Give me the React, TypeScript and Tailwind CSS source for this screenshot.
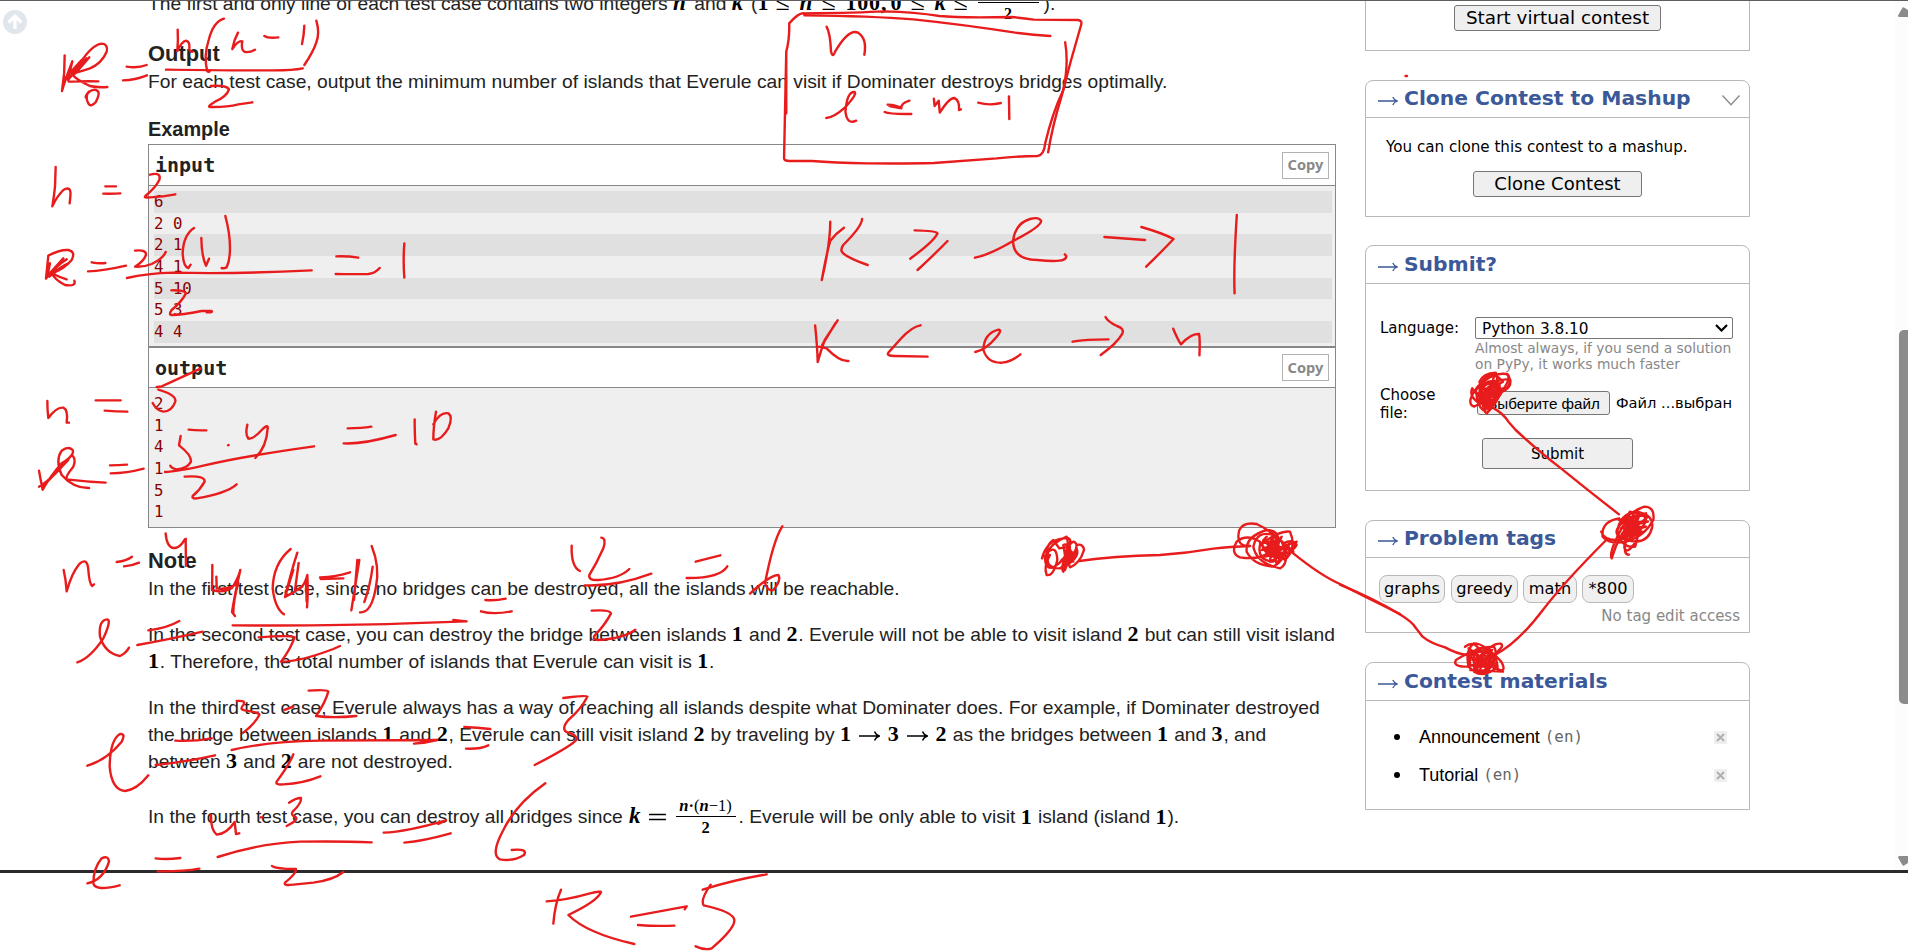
import React from "react";

const sans = "font-['Liberation_Sans',Arial,sans-serif]";
const verdana = "font-['DejaVu_Sans',Verdana,sans-serif]";
const mono = "font-['DejaVu_Sans_Mono',Consolas,monospace]";

function N({ children }: { children: React.ReactNode }) {
  return (
    <span className="font-['Liberation_Serif',serif] text-[22px] leading-none font-bold tracking-[0.8px] text-black">
      {children}
    </span>
  );
}

function V({ children }: { children: React.ReactNode }) {
  return (
    <span className="font-['Liberation_Serif',serif] text-[23px] leading-none font-bold text-black italic">
      {children}
    </span>
  );
}

function Leq() {
  return (
    <span className="w-[24px] font-['Liberation_Serif',serif] text-[26px] leading-none text-black">≤</span>
  );
}

function Line({ children, className = "" }: { children: React.ReactNode; className?: string }) {
  return <p className={`h-[27px] text-[19.24px] leading-[27px] whitespace-nowrap ${className}`}>{children}</p>;
}

function CopyButton() {
  return (
    <button className="h-[27px] w-[47px] border border-[#b2b2b2] bg-white pb-px font-['Noto_Sans',sans-serif] text-[14.6px] leading-none font-bold text-[#888]">
      Copy
    </button>
  );
}

const inputRows = ["6", "2 0", "2 1", "4 1", "5 10", "5 3", "4 4"];
const outputRows = ["2", "1", "4", "1", "5", "1"];

function Samples() {
  return (
    <div className={`w-[1188px] border border-[#888] ${mono}`}>
      <div className="flex h-[40px] items-center justify-between pr-[6px] pl-[6px]">
        <span className="text-[20px] font-bold text-[#222]">input</span>
        <CopyButton />
      </div>
      <div className="h-[161px] border-t border-[#888] bg-[#efefef] pt-[5px] pr-[3px] pl-[5px]">
        {inputRows.map((row, i) => (
          <div
            key={row}
            className={`h-[21.67px] text-[15.7px] leading-[22px] whitespace-pre text-[#880000] ${i % 2 === 0 ? "bg-[#e0e0e0]" : ""}`}
          >
            {row}
          </div>
        ))}
      </div>
      <div className="flex h-[41px] items-center justify-between border-t-2 border-[#888] pr-[6px] pl-[6px]">
        <span className="text-[20px] font-bold text-[#222]">output</span>
        <CopyButton />
      </div>
      <div className="h-[140px] border-t border-[#888] bg-[#efefef] pt-[5px] pl-[5px]">
        {outputRows.map((row, i) => (
          <div key={i} className="h-[21.7px] text-[15.7px] leading-[22px] text-[#880000]">
            {row}
          </div>
        ))}
      </div>
    </div>
  );
}

function Statement() {
  return (
    <main className={`w-[1188px] shrink-0 text-[#222] ${sans}`}>
      <div className="flex h-[17px] items-end">
        <Line className="mb-[2.5px] flex items-baseline">
          <span className="whitespace-pre">
            The first and only line of each test case contains two integers{" "}
          </span>
          <span className="w-[16px]"><V>n</V></span>
          <span className="whitespace-pre"> and </span>
          <span className="w-[14px]"><V>k</V></span>
          <span className="whitespace-pre"> (</span>
          <span className="flex items-baseline">
            <span className="w-[18px]"><N>1</N></span>
            <Leq />
            <span className="w-[22px]"><V>n</V></span>
            <Leq />
            <span className="w-[45px]"><N>100,</N></span>
            <span className="w-[20px]"><N>0</N></span>
            <Leq />
            <span className="w-[19px]"><V>k</V></span>
            <Leq />
            <span className="inline-flex w-[61px] translate-y-[9px] flex-col items-center border-t-[1.5px] border-black pt-[3px] font-['Liberation_Serif',serif] text-[16px] leading-none font-bold text-black">
              2
            </span>
          </span>
          <span className="pl-[5px]">).</span>
        </Line>
      </div>
      <h3 className="mt-[22px] h-[27px] text-[21.9px] leading-[27px] font-bold">Output</h3>
      <Line className="mt-[1px] tracking-[0.008px]">
        For each test case, output the minimum number of islands that Everule can visit if Dominater destroys bridges
        optimally.
      </Line>
      <h3 className="mt-[21px] h-[27px] text-[19.9px] leading-[27px] font-bold">Example</h3>
      <div className="mt-[1px]">
        <Samples />
      </div>
      <h3 className="mt-[19px] h-[27px] text-[21.9px] leading-[27px] font-bold">Note</h3>
      <Line className="mt-[1px]">
        In the first test case, since no bridges can be destroyed, all the islands will be reachable.
      </Line>
      <Line className="mt-[19px]">
        In the second test case, you can destroy the bridge between islands <N>1</N> and <N>2</N>. Everule will not be
        able to visit island <N>2</N> but can still visit island
      </Line>
      <Line>
        <N>1</N>. Therefore, the total number of islands that Everule can visit is <N>1</N>.
      </Line>
      <Line className="mt-[19px]">
        In the third test case, Everule always has a way of reaching all islands despite what Dominater does. For
        example, if Dominater destroyed
      </Line>
      <Line>
        the bridge between islands <N>1</N> and <N>2</N>, Everule can still visit island <N>2</N> by traveling by{" "}
        <N>1</N>
        <MathArrow />
        <N>3</N>
        <MathArrow />
        <N>2</N> as the bridges between <N>1</N> and <N>3</N>, and
      </Line>
      <Line>
        between <N>3</N> and <N>2</N> are not destroyed.
      </Line>
      <Line className="mt-[28px] flex items-center">
        <span className="whitespace-pre">In the fourth test case, you can destroy all bridges since </span>
        <span className="ml-px"><V>k</V></span>
        <svg className="mx-[8px] h-[8px] w-[17px]" viewBox="0 0 17 8">
          <path d="M0 1.5H17M0 6.5H17" stroke="#000" strokeWidth="1.5" />
        </svg>
        <span className="ml-[2px] flex w-[60px] flex-col items-center font-['Liberation_Serif',serif] text-[16.5px] leading-[18px] text-black">
          <span className="h-[19px] w-full border-b-[1.5px] border-black text-center leading-[16px] whitespace-nowrap">
            <i className="font-bold">n</i>
            <b>·</b>(<i className="font-bold">n</i>−1)
          </span>
          <span className="h-[19px] leading-[22px] font-bold">2</span>
        </span>
        <span className="pl-[3px] whitespace-pre">. Everule will be only able to visit </span>
        <N>1</N>
        <span className="whitespace-pre"> island (island </span>
        <N>1</N>
        <span>).</span>
      </Line>
    </main>
  );
}

function MathArrow() {
  return (
    <svg className="mx-[7.5px] inline-block h-[12px] w-[21px] align-[-1px]" viewBox="0 0 21 12" fill="none" stroke="#000" strokeWidth="1.4">
      <path d="M0 6H20M15.5 1.5Q17 5 20.5 6Q17 7 15.5 10.5" />
    </svg>
  );
}

type BoxProps = {
  title: string;
  children: React.ReactNode;
  className?: string;
  head?: string;
  chevron?: boolean;
};

function Box({ title, children, className = "", head = "h-[37px]", chevron = false }: BoxProps) {
  return (
    <section className={`w-[385px] rounded-t-[8px] border border-[#b9b9b9] bg-white ${className}`}>
      <header className={`flex items-center border-b border-[#b9b9b9] pr-[9px] pl-[12px] text-[#3b5998] ${head}`}>
        <svg className="mt-[4px] h-[10px] w-[20px]" viewBox="0 0 20 10" fill="none" stroke="currentColor" strokeWidth="1.3">
          <path d="M0 5H19M14.8 1Q16 4 19.4 5Q16 6 14.8 9" />
        </svg>
        <h2 className="ml-[6px] pb-px text-[20.3px] leading-[35px] font-bold whitespace-nowrap">{title}</h2>
        {chevron && (
          <svg className="mt-[2px] ml-auto h-[11px] w-[18px]" viewBox="0 0 18 11" fill="none" stroke="#888" strokeWidth="1.3">
            <path d="M0.5 0.5L9 9.8L17.5 0.5" />
          </svg>
        )}
      </header>
      {children}
    </section>
  );
}

const btn = "flex items-center justify-center rounded-[3px] border border-[#767676] bg-[#efefef] leading-none text-black whitespace-nowrap";

function Material({ name }: { name: string }) {
  return (
    <li className="flex h-[38px] items-center">
      <span className="size-[6px] rounded-full bg-black" />
      <span className={`ml-[19px] text-[18px] tracking-[-0.02px] ${sans}`}>{name}</span>
      <span className={`ml-[5px] text-[15.8px] text-[#666] ${mono}`}>(en)</span>
      <span className="ml-auto flex h-[13px] w-[13px] items-center justify-center bg-[#efefef]">
        <svg className="size-[9px]" viewBox="0 0 9 9" stroke="#b0b0b0" strokeWidth="2">
          <path d="M1 1L8 8M8 1L1 8" />
        </svg>
      </span>
    </li>
  );
}

function Sidebar() {
  return (
    <aside className={`w-[385px] shrink-0 text-black ${verdana}`}>
      <div className="flex h-[50px] justify-center border-x border-b border-[#b9b9b9] pt-[4px]">
        <button className={`${btn} h-[26px] w-[207px] text-[18.4px] tracking-[-0.03px]`}>Start virtual contest</button>
      </div>
      <Box title="Clone Contest to Mashup" className="mt-[29px] h-[137px]" chevron>
        <p className="mt-[20px] pl-[20px] text-[15.15px] leading-[19px]">You can clone this contest to a mashup.</p>
        <button className={`${btn} mx-auto mt-[14px] h-[26px] w-[169px] text-[18px]`}>Clone Contest</button>
      </Box>
      <Box title="Submit?" className="mt-[28px] h-[246px]" head="h-[38px]">
        <div className="flex pt-[33px] pl-[14px]">
          <div className="w-[95px] text-[15px] leading-[18px]">
            <div className="pt-[2px]">Language:</div>
            <div className="mt-[49px]">Choose<br />file:</div>
          </div>
          <div className="w-[260px]">
            <div className="flex h-[22px] w-[258px] items-center justify-between rounded-[2px] border border-[#767676] bg-white pr-[4px] pl-[6px] text-[15.3px] leading-none">
              <span className="pt-[3px]">Python 3.8.10</span>
              <svg className="h-[8px] w-[13px]" viewBox="0 0 13 8" fill="none" stroke="#000" strokeWidth="2.2">
                <path d="M1 1L6.5 6.5L12 1" />
              </svg>
            </div>
            <p className="mt-px text-[13.8px] leading-[16px] whitespace-nowrap text-[#888]">
              Almost always, if you send a solution
              <br />
              on PyPy, it works much faster
            </p>
            <div className="mt-[19px] flex items-center pl-[2px]">
              <button className={`${btn} h-[24px] w-[133px] pt-[2px] text-[15.2px] ${sans}`}>Выберите файл</button>
              <span className="ml-[6px] text-[14.65px] leading-[24px] whitespace-nowrap">Файл ...выбран</span>
            </div>
            <button className={`${btn} mt-[23px] ml-[7px] h-[31px] w-[151px] pt-[2px] text-[15px]`}>Submit</button>
          </div>
        </div>
      </Box>
      <Box title="Problem tags" className="mt-[29px] h-[113px]">
        <div className="flex pt-[17px] pl-[13px] text-[16.2px] leading-[25px]">
          {[
            ["graphs", "w-[66px] mr-[6px]"],
            ["greedy", "w-[67px] mr-[5px]"],
            ["math", "w-[54px] mr-[5px]"],
            ["*800", "w-[52px]"],
          ].map(([t, w]) => (
            <span key={t} className={`flex h-[28px] justify-center rounded-[8px] border border-[#b9b9b9] bg-[#f0f0f0] ${w}`}>
              {t}
            </span>
          ))}
        </div>
        <p className="mt-[3px] pr-[9px] text-right text-[15px] leading-[20px] text-[#888]">No tag edit access</p>
      </Box>
      <Box title="Contest materials" className="mt-[29px] h-[148px]" head="h-[38px]">
        <ul className="pt-[17px] pr-[22px] pl-[28px]">
          <Material name="Announcement" />
          <Material name="Tutorial" />
        </ul>
      </Box>
    </aside>
  );
}

type Sheet = { x: number; y: number; sx: number; sy: number; strokes: string[] };

const sheets: Sheet[] = [
  {
    x: 0, y: 0, sx: 3, sy: 3,
    strokes: [
      "M194 166Q195 220 186 273Q195 240 217 184Q210 210 204 240Q235 200 268 172Q240 205 224 222Q205 230 240 190Q275 135 305 131Q325 132 320 155Q305 190 270 205Q230 218 215 222Q230 240 270 258Q290 263 322 261M206 245Q250 243 295 244M190 240L245 180L215 225L260 175",
      "M266 275Q255 290 264 308Q272 325 288 305Q300 282 294 274Q285 265 270 274Q258 282 257 292",
      "M380 200Q415 205 440 195M369 241Q405 240 441 226",
      "M498 209Q700 212 820 211Q880 211 908 205",
      "M533 89Q535 120 532 153Q545 125 558 122Q570 125 568 145Q567 156 578 155",
      "M672 56Q640 65 626 120Q610 170 622 214Q628 218 630 212",
      "M714 98Q702 120 697 147Q715 120 727 124Q722 150 735 156Q750 158 765 149",
      "M793 108Q805 116 835 112M913 77Q912 105 906 132M949 62Q960 100 949 127Q940 155 913 195",
      "M632 258Q680 255 687 268Q680 290 645 305Q620 320 630 321Q680 322 715 313L757 307",
      "M167 501L165 560Q162 590 157 619Q170 590 190 570Q215 555 211 590L209 610",
      "M316 559H348M310 581Q340 582 361 580",
      "M450 524Q485 515 478 540Q465 565 436 588Q430 594 450 592Q490 590 526 583",
      "M145 767Q180 748 205 750Q228 755 215 780Q190 810 155 819Q165 840 195 855Q230 860 223 842M145 767L138 836Q160 800 200 778Q165 800 148 830Q180 800 205 790Q170 810 160 822Q175 830 200 838M150 790L142 828L190 775",
      "M275 787Q295 791 316 789M264 814Q310 813 378 797",
      "M405 752Q440 748 438 765Q430 785 405 800Q430 802 455 792Q490 775 497 756M381 834Q440 820 520 818Q700 823 935 811",
      "M582 684Q550 705 548 760Q550 800 565 804L572 794M604 714Q605 770 618 797L627 776M676 648Q690 700 690 745Q690 780 680 802Q672 806 665 804",
      "M514 871Q555 870 558 880Q545 905 515 930Q505 945 515 945Q545 945 605 933H635Q640 938 620 937",
      "M1009 769Q1045 768 1075 773M1007 822Q1060 823 1105 822Q1125 820 1139 804M1213 730Q1209 780 1213 833",
    ],
  },
  {
    x: 0, y: 300, sx: 3, sy: 3,
    strokes: [
      "M470 261L485 259L603 205M475 269Q530 285 526 305Q515 335 490 335Q470 332 458 309",
      "M142 303Q142 330 145 354Q170 320 190 323Q205 330 200 368L207 368",
      "M287 301H362M314 332Q350 335 382 335",
      "M117 512Q122 540 128 569Q150 530 185 490Q225 465 218 450Q205 437 185 452Q165 480 185 525Q220 565 267 564M117 560Q160 535 215 465Q230 475 220 500Q195 530 200 538Q260 545 317 548M130 558L205 480",
      "M330 496Q355 496 381 494M332 520Q380 520 431 506",
      "M495 516Q530 515 610 497Q720 470 942 439",
      "M566 389Q590 392 619 391M542 408L537 436Q575 465 573 485Q560 508 530 508Q515 505 511 497",
      "M684 436L686 435M742 374Q735 405 745 416Q760 418 785 390Q805 370 803 385Q800 440 766 474",
      "M554 530Q615 525 614 545Q600 570 578 588Q575 597 590 595Q680 580 710 553",
      "M1043 385Q1085 385 1114 380M1031 430Q1090 433 1187 405M1244 358Q1244 400 1246 431L1250 433M1308 335Q1300 380 1300 418Q1320 425 1345 385Q1360 350 1345 340Q1320 335 1300 373",
    ],
  },
  {
    x: 0, y: 520, sx: 3, sy: 3,
    strokes: [
      "M497 40Q500 80 520 84Q535 85 548 68Q560 50 557 60L558 137",
      "M191 150Q198 180 200 214Q215 160 238 132Q262 110 265 150Q268 190 276 198L282 193",
      "M350 126Q380 122 396 110M372 139Q395 138 417 128",
      "M232 427Q270 415 310 355Q335 300 322 298Q295 300 300 350Q315 400 360 408Q378 400 387 383",
      "M445 331Q500 325 538 303M412 375Q500 360 608 335",
      "M637 135Q637 175 636 210Q670 220 695 205Q715 175 721 150Q705 220 696 276L705 288M649 170Q650 195 650 205Q690 210 715 188Q700 240 700 280",
      "M872 87Q820 130 818 205Q825 265 852 283M892 98Q875 150 855 231Q880 220 905 200M896 129L885 210Q910 210 922 165Q925 220 921 262M918 180L920 245M855 231L880 150",
      "M960 172Q1010 170 1050 157M962 177L1030 175M1078 120Q1065 200 1054 271M1072 120L1062 240M1118 140Q1110 200 1093 246M1115 78Q1140 140 1128 200Q1115 280 1080 277",
      "M698 316Q1000 318 1200 311L1400 304L1360 300",
      "M776 352Q870 345 884 352Q870 390 843 425Q900 425 1000 387L1020 378",
      "M926 512Q980 508 985 515Q975 550 948 588Q1000 595 1069 588",
      "M710 543Q740 540 730 555Q715 570 740 572Q780 578 778 585Q765 610 730 638M853 570L880 560",
      "M262 737Q320 720 365 665Q378 640 360 642Q330 660 329 740Q335 810 375 813Q410 810 445 766",
      "M526 662Q580 665 635 655M467 735Q560 725 645 706",
      "M695 690Q800 665 960 662L1312 660Q1280 668 1242 671",
      "M880 703Q870 730 830 785Q825 795 850 793Q910 790 961 769",
      "M867 848Q890 833 903 834Q905 850 878 875Q870 885 888 892Q895 900 860 918M782 892H788",
      "M633 885Q632 930 650 944Q680 942 704 906L708 942L718 940",
      "M1151 938Q1220 935 1338 901L1315 912M1213 968Q1270 963 1352 940",
      "M262 1090Q310 1080 327 1025Q325 1005 305 1015Q280 1045 280 1090Q285 1115 359 1096",
      "M467 1015Q500 1019 541 1014M473 1054Q550 1055 598 1046",
      "M653 1011Q780 970 900 965Q1020 963 1115 967",
      "M816 1038Q830 1047 888 1047Q890 1060 855 1088Q850 1098 880 1094L940 1088Q1000 1080 1030 1056",
    ],
  },
  {
    x: 440, y: 520, sx: 3, sy: 3,
    strokes: [
      "M395 77Q393 140 420 153M484 53Q500 55 490 85Q470 130 448 165Q445 182 475 180Q540 175 568 147M434 196Q530 200 634 161",
      "M767 125L841 106M740 174Q840 175 862 139",
      "M1027 19Q1000 60 975 190Q985 215 1000 210Q1025 180 1015 165Q990 165 930 221",
      "M136 240Q165 243 197 236M123 274Q160 285 215 274",
      "M455 272Q510 268 513 280Q495 315 465 345Q455 360 475 360Q550 355 586 329",
      "M370 534Q440 525 442 530Q425 565 385 600Q360 630 385 638Q410 645 410 658Q400 675 284 735",
      "M73 621Q110 622 151 627M78 686Q120 688 145 676",
      "M316 790Q230 850 190 930Q150 1005 180 1018Q220 1025 252 1005Q265 985 215 990",
      "M363 1109Q345 1150 340 1211M320 1144Q380 1140 450 1120Q485 1112 483 1117Q470 1145 385 1185Q440 1240 583 1272",
      "M573 1190L740 1159L734 1168M594 1215Q640 1219 703 1217",
      "M812 1094Q780 1140 791 1156Q880 1175 883 1200Q885 1225 815 1285Q795 1292 767 1279M788 1109Q880 1080 980 1063",
    ],
  },
  {
    x: 760, y: 0, sx: 2.7034, sy: 3,
    strokes: [
      "M120 46Q300 48 415 58Q560 75 690 98Q740 105 785 108M118 40Q270 38 335 34Q420 36 485 48Q540 54 680 51Q710 54 740 59L860 60Q872 62 868 75Q840 180 815 290Q790 380 779 457",
      "M118 40Q105 38 79 70Q80 120 71 155V340M71 155L65 475Q65 483 80 483L140 483Q200 488 290 490Q400 491 470 489L640 475Q700 468 750 468Q768 465 771 430Q790 340 820 270Q835 190 825 127",
      "M180 80Q190 100 192 155Q197 175 203 155Q240 85 265 98Q290 115 282 164",
      "M179 354Q200 352 230 322Q265 280 255 276Q235 275 231 335Q235 375 260 362",
      "M345 314Q370 315 382 325Q380 310 404 302M337 336Q350 343 409 342M382 325L350 318",
      "M470 296L472 318L483 302L486 338Q510 295 525 294Q540 300 538 330L543 328M590 308Q620 318 651 309M673 289L674 357",
      "M190 665Q190 730 167 840Q180 760 190 722Q205 700 227 683M276 657Q275 680 225 735Q215 752 225 760Q240 775 291 795",
      "M418 691Q475 692 480 700Q470 725 406 776M507 723Q470 765 426 810",
      "M581 773Q620 765 684 723Q760 680 760 663Q755 650 730 657Q690 670 684 723Q685 780 750 780Q830 790 828 768L824 763",
      "M931 711L1041 720M1031 681Q1090 700 1118 717Q1090 750 1044 800M1289 645Q1280 800 1283 880",
      "M149 976Q155 1040 156 1086Q165 1050 175 1020L210 961M160 1040L180 1045Q215 1085 239 1083M168 1035L205 968",
      "M434 976Q410 980 380 1017L347 1058Q340 1068 365 1068L453 1070",
      "M582 1056Q610 1050 640 1010Q655 990 645 989Q605 1000 604 1050Q615 1090 655 1088Q680 1085 704 1063",
      "M845 1025Q880 1018 942 1018M934 951Q940 965 965 978Q985 985 980 1000Q965 1030 921 1065M1117 986Q1130 1020 1138 1033Q1165 1000 1187 1002Q1190 1020 1188 1066",
    ],
  },
  {
    x: 1340, y: 230, sx: 2.7606, sy: 3,
    strokes: [
      "M425 535Q450 550 465 575L485 600Q550 665 610 715L690 785L770 853",
      "M430 430Q375 440 390 500Q420 530 450 480Q475 440 460 432Q420 425 380 470Q345 520 370 530Q410 510 425 440Q440 430 430 470Q400 540 395 540Q380 530 375 480Q400 450 440 465Q450 500 405 550Q395 545 400 480Q440 440 470 450Q475 480 430 490Q380 510 365 475Q355 500 385 520Q430 530 445 480Q430 440 400 460Q380 480 400 545L425 455Q395 450 385 510L420 520L440 460L395 490L410 530L450 475",
      "M380 490L440 480L385 515L430 510L390 470L435 450L405 500L445 490L420 530L395 465L380 500L450 455L430 435L400 445",
      "M462 432Q480 460 452 482L425 500M430 428Q395 430 385 455L395 500L385 480L410 540L440 485",
    ],
  },
  {
    x: 1340, y: 490, sx: 2.7606, sy: 3,
    strokes: [
      "M0 284Q100 330 160 370Q200 395 210 415L228 440Q250 460 290 472Q320 490 350 495",
      "M430 493Q490 460 560 360Q620 275 735 150",
      "M770 85Q720 95 725 140Q745 165 790 155Q840 140 865 90Q870 50 840 50Q790 70 770 110Q750 150 820 155Q855 150 862 110Q865 75 820 65Q770 70 765 130Q780 175 815 170Q830 120 810 90Q770 130 750 205Q740 190 780 110Q830 60 845 85Q840 130 770 140Q750 120 790 90Q830 100 820 150Q790 200 785 170L795 100Q815 90 830 120Q790 145 760 150Q730 150 721 125",
      "M770 90L845 70L780 100L850 95L775 115L845 110L780 130L835 125L790 150L810 70L800 145L825 80L775 150L850 80L800 65L785 125L815 135L800 90L840 100M790 150Q780 195 798 194",
      "M345 470Q370 450 385 480L440 540Q460 545 445 515Q400 460 370 460Q345 480 355 530Q380 560 410 540Q440 500 425 470Q380 470 320 510Q310 530 350 530Q420 510 447 470Q450 455 425 465Q370 500 370 545Q400 565 435 530Q430 480 395 475Q350 490 360 525Q390 540 425 510Q420 480 380 485Q355 500 385 550Q410 550 415 480Q385 460 355 500L450 545L360 540",
      "M360 490L420 480L365 510L430 500L370 530L430 520L385 550L400 475L375 540L415 485L390 530L420 530L355 475L400 510L375 495L410 545",
    ],
  },
  {
    x: 920, y: 480, sx: 3, sy: 3,
    strokes: [
      "M478 243Q580 228 720 225Q800 220 880 206Q930 200 990 198M1095 202L1120 220Q1200 285 1260 312L1340 352L1440 402",
      "M366 235Q380 180 430 175Q455 170 450 190Q440 240 400 262Q375 270 375 230Q390 190 440 170Q450 200 430 275Q420 270 440 210Q460 170 470 195Q465 240 420 265Q370 265 385 215Q410 195 412 240Q400 290 380 285Q370 260 390 225M470 195Q490 190 492 210Q480 250 450 262Q440 250 470 205Q480 230 440 255L430 195Q450 185 460 245L425 240L455 215L435 270L450 200L418 205L400 180Q370 200 385 250",
      "M990 198Q945 200 958 150Q970 125 1010 132Q1050 150 1085 185Q1110 230 1060 260Q1000 255 980 215Q975 170 1040 150Q1080 150 1075 190Q1040 245 960 232Q930 220 950 185Q980 160 1020 185Q1050 240 1100 235Q1130 200 1110 155Q1080 150 1020 195Q1010 240 1060 245Q1095 215 1060 165Q1010 150 1000 200Q1010 250 1080 265Q1110 250 1090 190Q1120 175 1130 195Q1110 230 1050 225Q1010 200 1040 170",
      "M1020 190L1080 180L1025 210L1090 200L1035 230L1100 215L1050 245L1060 160L1040 225L1085 170L1055 230L1110 190L1070 250L1045 185L1095 240L1130 185L1100 195L1120 215L1075 175L1065 215L1030 180",
    ],
  },
  { x: 1405.5, y: 75, sx: 1, sy: 1, strokes: ["M0 1L1.5 1"] },
];

function Ink() {
  return (
    <svg
      className="pointer-events-none absolute inset-0 h-[951px] w-[1908px]"
      viewBox="0 0 1908 951"
      fill="none"
      stroke="#e81c1c"
      strokeWidth="2.4"
      strokeLinecap="round"
      strokeLinejoin="round"
    >
      {sheets.map((s, i) => (
        <g key={i} transform={`translate(${s.x} ${s.y}) scale(${1 / s.sx} ${1 / s.sy})`}>
          {s.strokes.map((d, j) => (
            <path key={j} d={d} vectorEffect="non-scaling-stroke" />
          ))}
        </g>
      ))}
    </svg>
  );
}

export default function App() {
  return (
    <div className="relative h-[951px] w-[1908px] overflow-hidden bg-white">
      <div className="flex h-[873px] overflow-hidden border-t border-b-[3px] border-t-[#5f5d5f] border-b-[#2b2a2c]">
        <div className="w-[148px] shrink-0 pt-[9px] pl-[3px]">
          <svg className="size-[24px]" viewBox="0 0 24 24">
            <circle cx="12" cy="12" r="12" fill="#e1e5ec" />
            <path d="M12 19V7M5.5 12.5L12 6L18.5 12.5" fill="none" stroke="#fff" strokeWidth="3.2" />
          </svg>
        </div>
        <Statement />
        <div className="w-[29px] shrink-0" />
        <Sidebar />
        <div className="ml-auto flex w-[13px] shrink-0 flex-col items-end bg-[#fcfcfc] pt-[6px] pb-[4px]">
          <svg className="h-[10px] w-[10px]" viewBox="0 0 10 10">
            <path d="M0 8.5Q0 10 1.5 10H10V3L6 0.5Q5 0 4.3 1Z" fill="#8b8b8b" />
          </svg>
          <div className="mt-[313px] h-[374px] w-[9px] rounded-l-[5px] bg-[#8b8b8b]" />
          <svg className="mt-auto h-[10px] w-[10px]" viewBox="0 0 10 10">
            <path d="M0 1.5Q0 0 1.5 0H10V7L6 9.5Q5 10 4.3 9Z" fill="#8b8b8b" />
          </svg>
        </div>
      </div>
      <Ink />
    </div>
  );
}
